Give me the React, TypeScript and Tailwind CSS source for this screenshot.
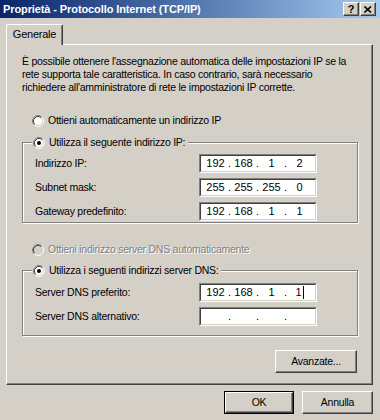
import React from "react";

const Radio = ({ checked, disabled }: { checked?: boolean; disabled?: boolean }) => (
  <svg width="12" height="12" viewBox="0 0 12 12" className="shrink-0">
    <circle cx="6" cy="6" r="4.5" fill={disabled ? "#d4d0c8" : "#ffffff"} />
    <path d="M2.11 9.89 A5.5 5.5 0 0 1 9.89 2.11" fill="none" stroke="#808080" strokeWidth="1" />
    <path d="M9.89 2.11 A5.5 5.5 0 0 1 2.11 9.89" fill="none" stroke="#ffffff" strokeWidth="1" />
    <path d="M2.82 9.18 A4.5 4.5 0 0 1 9.18 2.82" fill="none" stroke="#404040" strokeWidth="1" />
    <path d="M9.18 2.82 A4.5 4.5 0 0 1 2.82 9.18" fill="none" stroke="#d4d0c8" strokeWidth="1" />
    {checked && <circle cx="6" cy="6" r="2" fill="#000000" />}
  </svg>
);

const Cell = ({ v, caret }: { v: string; caret?: boolean }) => (
  <span className="w-[23px] flex items-center justify-center">
    {v}
    {caret && <span className="inline-block w-[1px] h-[13px] bg-black ml-[1px]" />}
  </span>
);
const Dot = () => <span className="w-[5px] text-center">.</span>;

const IpField = ({ o, caret }: { o: string[]; caret?: boolean }) => (
  <div className="w-[118px] h-[19px] border border-t-[#808080] border-l-[#808080] border-b-white border-r-white">
    <div className="w-full h-full bg-white border border-t-[#404040] border-l-[#404040] border-b-[#d4d0c8] border-r-[#d4d0c8] flex items-center pl-[3px] whitespace-nowrap text-[11px] tracking-normal">
      <Cell v={o[0]} />
      <Dot />
      <Cell v={o[1]} />
      <Dot />
      <Cell v={o[2]} />
      <Dot />
      <Cell v={o[3]} caret={caret} />
    </div>
  </div>
);

const Btn = ({ label, w, def }: { label: string; w: string; def?: boolean }) =>
  def ? (
    <div className={`${w} h-[23px] border border-black`}>
      <div className="w-full h-full bg-[#d4d0c8] border border-t-white border-l-white border-b-[#404040] border-r-[#404040] shadow-[inset_-1px_-1px_0_#808080] flex items-center justify-center">
        {label}
      </div>
    </div>
  ) : (
    <div className={`${w} h-[23px] bg-[#d4d0c8] border border-t-white border-l-white border-b-[#404040] border-r-[#404040] shadow-[inset_-1px_-1px_0_#808080] flex items-center justify-center`}>
      {label}
    </div>
  );

const CapBtn = ({ children }: { children: React.ReactNode }) => (
  <div className="w-[16px] h-[14px] bg-[#d4d0c8] border border-t-white border-l-white border-b-[#404040] border-r-[#404040] shadow-[inset_-1px_-1px_0_#808080] flex items-center justify-center text-black font-bold text-[11px] leading-none tracking-normal">
    {children}
  </div>
);

const Row = ({ label, o, caret }: { label: string; o: string[]; caret?: boolean }) => (
  <div className="flex items-center h-[19px]">
    <span className="w-[164px] whitespace-nowrap">{label}</span>
    <IpField o={o} caret={caret} />
  </div>
);

export default function App() {
  return (
    <div className="w-[380px] h-[420px] bg-[#d4d0c8] flex flex-col font-['Liberation_Sans',Arial,sans-serif] text-[10.5px] tracking-[-0.25px] leading-[13px] text-black overflow-hidden">
      <div className="h-[18px] flex items-center justify-between pl-[3px] pr-[4px] bg-gradient-to-r from-[#0a246a] to-[#a6caf0]">
        <span className="text-white font-bold text-[11px] tracking-[-0.1px] whitespace-nowrap">Proprietà - Protocollo Internet (TCP/IP)</span>
        <div className="flex gap-[1px]">
          <CapBtn>?</CapBtn>
          <CapBtn>
            <svg width="8" height="7" viewBox="0 0 8 7">
              <path d="M0.5 0.5 L7 6.5 M7 0.5 L0.5 6.5" stroke="#000" strokeWidth="1.6" />
            </svg>
          </CapBtn>
        </div>
      </div>

      <div className="pl-[6px] pr-[7px] pt-[6px] flex flex-col">
        <div className="relative z-10 w-[57px] h-[21px] -mb-[1px] bg-[#d4d0c8] border-t border-l border-r border-t-white border-l-white border-r-[#404040] shadow-[inset_-1px_0_0_#808080] rounded-t-[2px] flex items-center justify-center pb-[1px] text-[11px]">
          Generale
        </div>
        <div className="h-[341px] border border-t-white border-l-white border-r-[#404040] border-b-[#404040] shadow-[inset_-1px_-1px_0_#808080] pl-[15px] pr-[14px] pt-[10px] flex flex-col">
          <p className="whitespace-nowrap">
            È possibile ottenere l'assegnazione automatica delle impostazioni IP se la
            <br />
            rete supporta tale caratteristica. In caso contrario, sarà necessario
            <br />
            richiedere all'amministratore di rete le impostazioni IP corrette.
          </p>

          <div className="mt-[20px] h-[13px] flex items-center gap-[4px] pl-[10px] whitespace-nowrap">
            <Radio />
            <span>Ottieni automaticamente un indirizzo IP</span>
          </div>

          <div className="relative mt-[15px] h-[81px] border border-[#808080] shadow-[1px_1px_0_#fff,inset_1px_1px_0_#fff] pt-[11px] pl-[12px] flex flex-col gap-[5px]">
            <div className="absolute left-[9px] top-[-7px] h-[13px] bg-[#d4d0c8] pl-[1px] pr-[3px] flex items-center gap-[4px] whitespace-nowrap">
              <Radio checked />
              <span>Utilizza il seguente indirizzo IP:</span>
            </div>
            <Row label="Indirizzo IP:" o={["192", "168", "1", "2"]} />
            <Row label="Subnet mask:" o={["255", "255", "255", "0"]} />
            <Row label="Gateway predefinito:" o={["192", "168", "1", "1"]} />
          </div>

          <div className="mt-[20px] h-[13px] flex items-center gap-[4px] pl-[10px] whitespace-nowrap">
            <Radio disabled />
            <span className="text-[#808080] [text-shadow:1px_1px_0_#fff]">Ottieni indirizzo server DNS automaticamente</span>
          </div>

          <div className="relative mt-[14px] h-[66px] border border-[#808080] shadow-[1px_1px_0_#fff,inset_1px_1px_0_#fff] pt-[12px] pl-[12px] flex flex-col gap-[5px]">
            <div className="absolute left-[9px] top-[-7px] h-[13px] bg-[#d4d0c8] pl-[1px] pr-[3px] flex items-center gap-[4px] whitespace-nowrap">
              <Radio checked />
              <span>Utilizza i seguenti indirizzi server DNS:</span>
            </div>
            <Row label="Server DNS preferito:" o={["192", "168", "1", "1"]} caret />
            <Row label="Server DNS alternativo:" o={["", "", "", ""]} />
          </div>

          <div className="mt-[14px] self-end mr-[1px]">
            <Btn label="Avanzate..." w="w-[82px]" />
          </div>
        </div>
      </div>

      <div className="mt-[6px] pr-[7px] flex justify-end gap-[8px]">
        <Btn label="OK" w="w-[70px]" def />
        <Btn label="Annulla" w="w-[71px]" />
      </div>
    </div>
  );
}
